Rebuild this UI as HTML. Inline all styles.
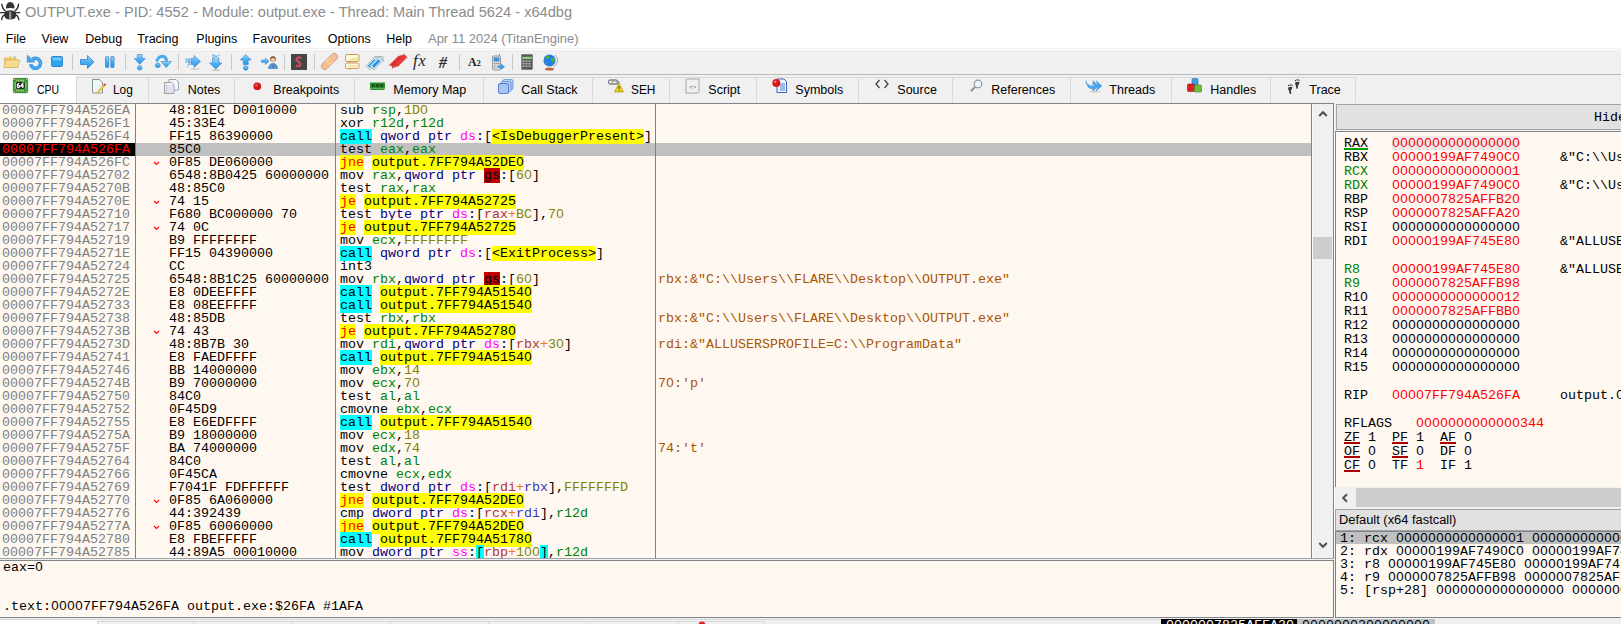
<!DOCTYPE html>
<html><head><meta charset="utf-8"><title>x64dbg</title>
<style>
*{margin:0;padding:0;box-sizing:border-box}
html,body{width:1621px;height:624px;overflow:hidden;background:#fff}
body{position:relative;font-family:"Liberation Sans",sans-serif;color:#000}
.a{position:absolute}
.ui{position:absolute;font-family:"Liberation Sans",sans-serif;font-size:12.5px;line-height:14px;white-space:pre;transform-origin:0 0}
.m{font-family:"Liberation Mono",monospace;font-size:13.3333px;white-space:pre}
.m i{font-family:"Liberation Sans",sans-serif;font-style:normal;display:inline-block;width:8px;text-align:center;line-height:10px}
.row{position:absolute;height:13px;line-height:13px}
.hl{position:absolute}
svg{position:absolute;overflow:visible}

.dz .mn,.dz .cm,.dz .br{color:#000}
.dz .cl{background:#00ffff;color:#000}
.dz .jc{background:#ffff00;color:#ff0000}
.dz .rg{color:#008300}
.dz .vl{color:#828200}
.dz .sz{color:#000080}
.dz .sg{color:#ff00ff}
.dz .gs{background:#c00000;color:#000}
.dz .ad{background:#ffff00;color:#000}
.dz .bs{background:#00ffff;color:#000}
.dz .mb{color:#b03434}
.dz .mi{color:#3838bc}
.dz .op{color:#f27711}
.ac{color:#aa5500}
</style></head><body>
<svg style="left:0;top:0" width="21" height="22" viewBox="0 0 21 22">
<g fill="#333"><path d="M6 8.6 Q6 2 10.2 2 Q14.5 2 14.5 8.6 Q10.2 7.6 6 8.6z"/>
<path d="M4.4 12 Q10.2 8.6 16 12 V15.5 Q16 19.4 10.2 19.4 Q4.4 19.4 4.4 15.5z"/></g>
<g fill="none" stroke="#333" stroke-width="1.4" stroke-linecap="round">
<path d="M1.8 4.2 Q2.4 9 5.5 11"/><path d="M18.6 4.2 Q18 9 15 11"/>
<path d="M0.3 12.6 H19.8"/>
<path d="M1.6 19.6 Q2.4 15.5 5 14.8"/><path d="M18.8 19.6 Q18 15.5 15.4 14.8"/></g>
<rect x="9.1" y="11.6" width="2.1" height="7.8" fill="#9a9a9a"/>
</svg>
<div class="ui" style="left:25px;top:1px;font-size:14.6px;line-height:22px;color:#8c8c8c">OUTPUT.exe - PID: 4552 - Module: output.exe - Thread: Main Thread 5624 - x64dbg</div>
<div class="ui" style="left:5.8px;top:32px">File</div>
<div class="ui" style="left:41.5px;top:32px">View</div>
<div class="ui" style="left:85.3px;top:32px">Debug</div>
<div class="ui" style="left:137.3px;top:32px">Tracing</div>
<div class="ui" style="left:196.3px;top:32px">Plugins</div>
<div class="ui" style="left:252.6px;top:32px">Favourites</div>
<div class="ui" style="left:327.7px;top:32px">Options</div>
<div class="ui" style="left:386.3px;top:32px">Help</div>
<div class="ui" style="left:428.3px;top:32px;color:#8a8a8a;transform:scaleX(1.037)">Apr 11 2024 (TitanEngine)</div>
<div class="a" style="left:0;top:48px;width:1621px;height:1px;background:#f0f0f0"></div>
<div class="a" style="left:0;top:50px;width:1621px;height:24px;background:#f0f0f0"></div>
<div class="a" style="left:0;top:74px;width:1621px;height:1px;background:#b9b9b9"></div>
<div class="a" style="left:0;top:75px;width:1621px;height:29px;background:#f0f0f0"></div>
<svg width="0" height="0" style="left:0;top:0"><defs><linearGradient id="gb" x1="0" y1="0" x2="0" y2="1"><stop offset="0" stop-color="#a6dbfb"/><stop offset="0.45" stop-color="#55b2f0"/><stop offset="1" stop-color="#1b98f2"/></linearGradient><linearGradient id="gf" x1="0" y1="0" x2="0" y2="1"><stop offset="0" stop-color="#fbe7a0"/><stop offset="1" stop-color="#e6c26a"/></linearGradient></defs></svg>
<svg style="left:3px;top:55px" width="17" height="14" viewBox="0 0 17 14"><path d="M1 2.5 h5 l1.5 -1.5 h4 v2 h2 v9.5 H1z" fill="#e9c66e"/>
<path d="M1 12.5 L2.5 5 H16.5 L15 12.5 z" fill="#f5dc92" stroke="#d8b25a" stroke-width="0.8"/>
<rect x="8" y="1.5" width="3" height="1.3" fill="#fff"/><circle cx="11.8" cy="2.2" r="0.8" fill="#3aa7d8"/></svg>
<svg style="left:27px;top:55px" width="15" height="15" viewBox="0 0 15 15"><path d="M3.6 9.2 A5 5 0 1 0 5.6 4.2" fill="none" stroke="#2f95e6" stroke-width="3.6"/>
<path d="M3.6 9.2 A5 5 0 1 0 5.6 4.2" fill="none" stroke="#7cc6f6" stroke-width="1.2" stroke-opacity="0.6"/>
<path d="M0.3 0.3 L8 6.8 L0.3 7.3 z" fill="#4aaaf0" stroke="#2f80cf" stroke-width="0.6"/></svg>
<svg style="left:51px;top:56px" width="12" height="11" viewBox="0 0 12 11"><rect x="0.5" y="0.5" width="11" height="10" rx="1" fill="#2ba3ef" stroke="#2f80cf" stroke-width="1"/>
<rect x="1.5" y="1.5" width="9" height="3" fill="#6cc6fa"/></svg>
<div class="a" style="left:72px;top:54px;width:1px;height:16px;background:#c8c8c8"></div>
<svg style="left:80px;top:55px" width="15" height="14" viewBox="0 0 15 14"><path d="M0.5 4.5 H7.5 V0.5 L14 7 L7.5 13.5 V9.5 H0.5 z" fill="url(#gb)" stroke="#2f80cf" stroke-width="0.8"/></svg>
<svg style="left:105px;top:56px" width="10" height="12" viewBox="0 0 10 12"><rect x="0.5" y="0.5" width="3.2" height="11" rx="1" fill="url(#gb)" stroke="#2f80cf" stroke-width="0.8"/>
<rect x="5.8" y="0.5" width="3.2" height="11" rx="1" fill="url(#gb)" stroke="#2f80cf" stroke-width="0.8"/></svg>
<div class="a" style="left:125px;top:54px;width:1px;height:16px;background:#c8c8c8"></div>
<svg style="left:134px;top:54px" width="12" height="17" viewBox="0 0 12 17"><path d="M3.3 0.5 H8.2 V4.5 H11.2 L5.75 10.2 L0.3 4.5 H3.3 z" fill="url(#gb)" stroke="#2f80cf" stroke-width="0.6"/>
<circle cx="5.75" cy="13.8" r="2.3" fill="url(#gb)" stroke="#2f80cf" stroke-width="0.6"/></svg>
<svg style="left:155px;top:55px" width="17" height="14" viewBox="0 0 17 14"><path d="M1.5 6.5 Q4 0.5 8.5 1.5 Q11.5 2.5 11.5 6" fill="none" stroke="#4aaaf0" stroke-width="3"/>
<path d="M6 6.5 H16.5 L11.25 12.5 z" fill="url(#gb)" stroke="#2f80cf" stroke-width="0.6"/>
<circle cx="2.8" cy="10.3" r="2.4" fill="url(#gb)" stroke="#2f80cf" stroke-width="0.6"/></svg>
<div class="a" style="left:178px;top:54px;width:1px;height:16px;background:#c8c8c8"></div>
<svg style="left:185px;top:55px" width="17" height="15" viewBox="0 0 17 15"><path d="M6 3.5 H9 V0.5 L15.5 6.5 L9 12.5 V9.5 H6 z" fill="url(#gb)" stroke="#2f80cf" stroke-width="0.6"/>
<g fill="#52aef0"><rect x="0.5" y="3.5" width="2" height="2"/><rect x="3" y="3.5" width="2" height="2"/><rect x="3" y="6" width="2" height="2"/><rect x="0.5" y="6" width="2" height="1.5"/><rect x="3" y="8.5" width="2" height="1.5"/><rect x="2" y="10.5" width="1.2" height="1.2"/></g>
<ellipse cx="10" cy="14" rx="5" ry="0.8" fill="#c9c9c9"/></svg>
<svg style="left:209px;top:54px" width="14" height="17" viewBox="0 0 14 17"><path d="M3.5 5 V9 H0.5 L6.75 15 L13 9 H10 V5 z" fill="url(#gb)" stroke="#2f80cf" stroke-width="0.6"/>
<g fill="#52aef0"><rect x="3.5" y="0.5" width="2" height="2"/><rect x="6" y="1.5" width="2" height="2"/><rect x="3.5" y="3" width="2" height="1.8"/><rect x="8.5" y="3" width="1.5" height="1.8"/><rect x="9.5" y="0.8" width="1.2" height="1.2"/></g>
<ellipse cx="7" cy="16.3" rx="4.5" ry="0.7" fill="#bdbdbd"/></svg>
<div class="a" style="left:231px;top:54px;width:1px;height:16px;background:#c8c8c8"></div>
<svg style="left:240px;top:54px" width="12" height="17" viewBox="0 0 12 17"><path d="M3.3 10.5 H8.2 V6 H11.2 L5.75 0.5 L0.3 6 H3.3 z" fill="url(#gb)" stroke="#2f80cf" stroke-width="0.6"/>
<circle cx="5.75" cy="14" r="2.3" fill="url(#gb)" stroke="#2f80cf" stroke-width="0.6"/></svg>
<svg style="left:261px;top:55px" width="17" height="15" viewBox="0 0 17 15"><path d="M0.5 5 H4.5 V3 L8 6.2 L4.5 9.5 V7.5 H0.5 z" fill="url(#gb)" stroke="#2f80cf" stroke-width="0.5"/>
<circle cx="12" cy="4" r="2.8" fill="#7a4a2a"/><circle cx="12" cy="4.8" r="2.1" fill="#f0c8a0"/>
<path d="M7.5 13.5 Q8 8.5 12 8.5 Q16 8.5 16.5 13.5 z" fill="#4b9be0" stroke="#2f6fb0" stroke-width="0.6"/>
<path d="M12 8.8 L11.3 12.5 L12.7 12.5 z" fill="#c0392b"/></svg>
<div class="a" style="left:284px;top:54px;width:1px;height:16px;background:#c8c8c8"></div>
<svg style="left:291px;top:54px" width="16" height="16" viewBox="0 0 16 16"><rect x="0" y="0" width="16" height="16" fill="#454545"/>
<path d="M10.5 4.2 Q8 2.5 6 4 Q4.5 5.5 7 7.5 Q10.5 9.5 9 11.5 Q7.5 13 5 11.5" fill="none" stroke="#c8505a" stroke-width="2.2"/></svg>
<div class="a" style="left:314px;top:54px;width:1px;height:16px;background:#c8c8c8"></div>
<svg style="left:321px;top:53px" width="17" height="17" viewBox="0 0 17 17"><g transform="rotate(-45 8.5 8.5)"><rect x="-1.5" y="5.2" width="20" height="6.6" rx="3.3" fill="#f2c09a" stroke="#d19770" stroke-width="0.9"/>
<rect x="6.5" y="5.6" width="4" height="5.8" fill="#f8d8a8"/><rect x="7.5" y="6.8" width="2" height="3.4" fill="#f4c070"/></g></svg>
<svg style="left:345px;top:54px" width="15" height="16" viewBox="0 0 15 16"><rect x="0.5" y="0.5" width="13.5" height="7" rx="1.6" fill="#fdf8dc" stroke="#c99a5e" stroke-width="1"/>
<path d="M3 6.8 Q7 3.2 13 3.6 V6.8z" fill="#e8e08a" opacity="0.75"/>
<path d="M4 7.4 L4 9.2 L5.8 7.4z" fill="#c99a5e"/>
<rect x="0.5" y="9" width="13.5" height="5.5" rx="1.6" fill="#fdf8dc" stroke="#c99a5e" stroke-width="1"/>
<rect x="4" y="11" width="9" height="2" fill="#e8e08a" opacity="0.7"/>
<path d="M3.5 14.4 L3.5 16 L5.5 14.4z" fill="#c99a5e"/></svg>
<svg style="left:367px;top:54px" width="17" height="16" viewBox="0 0 17 16"><g transform="translate(0 0) rotate(-45 6 9)"><rect x="-1" y="6" width="13" height="5.6" fill="#eaf4f8" stroke="#8fa9b0" stroke-width="0.8"/><path d="M12 6 L14.6 8.8 L12 11.6z" fill="#eaf4f8" stroke="#8fa9b0" stroke-width="0.8"/><rect x="0.3" y="7.3" width="9.5" height="3" fill="#2a98e8"/><circle cx="12" cy="8.8" r="0.9" fill="#fff" stroke="#8fa9b0" stroke-width="0.4"/></g><g transform="translate(4 0) rotate(-45 6 9)"><rect x="-1" y="6" width="13" height="5.6" fill="#eaf4f8" stroke="#8fa9b0" stroke-width="0.8"/><path d="M12 6 L14.6 8.8 L12 11.6z" fill="#eaf4f8" stroke="#8fa9b0" stroke-width="0.8"/><rect x="0.3" y="7.3" width="9.5" height="3" fill="#2a98e8"/><circle cx="12" cy="8.8" r="0.9" fill="#fff" stroke="#8fa9b0" stroke-width="0.4"/></g></svg>
<svg style="left:390px;top:53px" width="17" height="17" viewBox="0 0 17 17"><g transform="translate(0 0.0) rotate(-45 6 9)"><path d="M-1 6.6 H12.5 V11 H-1 L0.8 8.8z" fill="#e83a3a" stroke="#c81e1e" stroke-width="0.5"/></g><g transform="translate(2.5 -0.8) rotate(-45 6 9)"><path d="M-1 6.6 H12.5 V11 H-1 L0.8 8.8z" fill="#e83a3a" stroke="#c81e1e" stroke-width="0.5"/></g><g transform="translate(5 -1.5) rotate(-45 6 9)"><path d="M-1 6.6 H12.5 V11 H-1 L0.8 8.8z" fill="#e83a3a" stroke="#c81e1e" stroke-width="0.5"/></g></svg>
<div class="a" style="left:413px;top:52px;font-family:'Liberation Serif',serif;font-style:italic;font-size:17px;line-height:18px;color:#2a2a2a;letter-spacing:0.5px">fx</div>
<div class="a" style="left:439px;top:54px;font-family:'Liberation Serif',serif;font-weight:bold;font-style:italic;font-size:16px;line-height:18px;color:#2a2a2a">#</div>
<div class="a" style="left:459px;top:54px;width:1px;height:16px;background:#c8c8c8"></div>
<div class="a" style="left:468px;top:55px;font-family:'Liberation Serif',serif;font-weight:bold;font-size:12px;line-height:14px;color:#222">A<span style="font-size:8px">2</span></div>
<svg style="left:492px;top:54px" width="14" height="17" viewBox="0 0 14 17"><rect x="0.5" y="2" width="8" height="14" rx="1" fill="#d9d9d9" stroke="#888" stroke-width="0.8"/>
<rect x="1.8" y="3.5" width="5.5" height="4" fill="#3c8fd8"/>
<g fill="#888"><rect x="2" y="9" width="1.3" height="1"/><rect x="4" y="9" width="1.3" height="1"/><rect x="6" y="9" width="1.3" height="1"/><rect x="2" y="11" width="1.3" height="1"/><rect x="2" y="13" width="1.3" height="1"/></g>
<line x1="7.5" y1="0" x2="7.5" y2="2" stroke="#555" stroke-width="0.6"/>
<path d="M5.5 11.5 H9 V9.5 L13 12.8 L9 16 V14 H5.5 z" fill="#3aa0ea"/></svg>
<div class="a" style="left:512px;top:54px;width:1px;height:16px;background:#c8c8c8"></div>
<svg style="left:521px;top:54px" width="12" height="16" viewBox="0 0 12 16"><rect x="0.3" y="0.3" width="11.4" height="15.4" rx="1" fill="#5a5a5a"/>
<rect x="1.3" y="2.8" width="9.4" height="2.3" fill="#8ed07a"/>
<g fill="#bdbdbd"><rect x="1.5" y="6.5" width="2" height="1.4"/><rect x="4.5" y="6.5" width="2" height="1.4"/><rect x="7.5" y="6.5" width="2" height="1.4"/>
<rect x="1.5" y="9" width="2" height="1.4"/><rect x="4.5" y="9" width="2" height="1.4"/><rect x="7.5" y="9" width="2" height="1.4"/>
<rect x="1.5" y="11.5" width="2" height="1.4"/><rect x="4.5" y="11.5" width="2" height="1.4"/><rect x="7.5" y="11.5" width="2" height="1.4"/></g></svg>
<svg style="left:543px;top:54px" width="15" height="17" viewBox="0 0 15 17"><circle cx="6.5" cy="6.5" r="6" fill="#2a7de0"/>
<path d="M3 2.5 Q5 1 7 3 Q6 5 4 5 Q2 4.5 3 2.5z M8 4 Q11 3.5 12 6 Q11 9 9 8 Q7.5 6 8 4z M3.5 8 Q5 8.5 5 11 Q3.5 10.5 3.5 8z" fill="#3cb44a"/>
<path d="M12 1 A7 7 0 0 1 10 13" fill="none" stroke="#999" stroke-width="0.8"/>
<ellipse cx="6.5" cy="15" rx="4.5" ry="1.5" fill="#c0643a"/></svg>
<div class="a" style="left:77px;top:77px;width:1278px;height:1px;background:#d9d9d9"></div>
<div class="a" style="left:76px;top:77px;width:1px;height:26px;background:#d9d9d9"></div>
<div class="a" style="left:148px;top:77px;width:1px;height:26px;background:#d9d9d9"></div>
<div class="a" style="left:234px;top:77px;width:1px;height:26px;background:#d9d9d9"></div>
<div class="a" style="left:354px;top:77px;width:1px;height:26px;background:#d9d9d9"></div>
<div class="a" style="left:483px;top:77px;width:1px;height:26px;background:#d9d9d9"></div>
<div class="a" style="left:592px;top:77px;width:1px;height:26px;background:#d9d9d9"></div>
<div class="a" style="left:669px;top:77px;width:1px;height:26px;background:#d9d9d9"></div>
<div class="a" style="left:756px;top:77px;width:1px;height:26px;background:#d9d9d9"></div>
<div class="a" style="left:858px;top:77px;width:1px;height:26px;background:#d9d9d9"></div>
<div class="a" style="left:952px;top:77px;width:1px;height:26px;background:#d9d9d9"></div>
<div class="a" style="left:1070px;top:77px;width:1px;height:26px;background:#d9d9d9"></div>
<div class="a" style="left:1171px;top:77px;width:1px;height:26px;background:#d9d9d9"></div>
<div class="a" style="left:1270px;top:77px;width:1px;height:26px;background:#d9d9d9"></div>
<div class="a" style="left:1355px;top:77px;width:1px;height:26px;background:#d9d9d9"></div>
<div class="a" style="left:0;top:75px;width:76px;height:28px;background:#fff"></div>
<div class="a" style="left:0;top:103px;width:1334px;height:1px;background:#7f858a"></div>
<div class="ui" style="left:37.0px;top:83px;transform:scaleX(0.84)">CPU</div>
<div class="ui" style="left:113.3px;top:83px;transform:scaleX(0.95)">Log</div>
<div class="ui" style="left:187.7px;top:83px">Notes</div>
<div class="ui" style="left:273.3px;top:83px">Breakpoints</div>
<div class="ui" style="left:393.3px;top:83px">Memory Map</div>
<div class="ui" style="left:521.3px;top:83px">Call Stack</div>
<div class="ui" style="left:631.3px;top:83px;transform:scaleX(0.95)">SEH</div>
<div class="ui" style="left:708.3px;top:83px">Script</div>
<div class="ui" style="left:795.3px;top:83px">Symbols</div>
<div class="ui" style="left:897.3px;top:83px">Source</div>
<div class="ui" style="left:991.3px;top:83px">References</div>
<div class="ui" style="left:1109.3px;top:83px">Threads</div>
<div class="ui" style="left:1210.3px;top:83px">Handles</div>
<div class="ui" style="left:1309.3px;top:83px">Trace</div>
<svg style="left:13px;top:78px" width="15" height="15" viewBox="0 0 15 15"><rect x="0.3" y="0.3" width="14.4" height="14.4" rx="1" fill="#2f9c37" stroke="#1f5f24" stroke-width="0.6"/>
<g fill="#e9d58a"><rect x="3.20" y="1.6" width="0.9" height="1.6"/><rect x="3.20" y="11.8" width="0.9" height="1.6"/><rect x="4.95" y="1.6" width="0.9" height="1.6"/><rect x="4.95" y="11.8" width="0.9" height="1.6"/><rect x="6.70" y="1.6" width="0.9" height="1.6"/><rect x="6.70" y="11.8" width="0.9" height="1.6"/><rect x="8.45" y="1.6" width="0.9" height="1.6"/><rect x="8.45" y="11.8" width="0.9" height="1.6"/><rect x="10.20" y="1.6" width="0.9" height="1.6"/><rect x="10.20" y="11.8" width="0.9" height="1.6"/><rect x="1.6" y="4.30" width="1.6" height="0.9"/><rect x="11.8" y="4.30" width="1.6" height="0.9"/><rect x="1.6" y="6.05" width="1.6" height="0.9"/><rect x="11.8" y="6.05" width="1.6" height="0.9"/><rect x="1.6" y="7.80" width="1.6" height="0.9"/><rect x="11.8" y="7.80" width="1.6" height="0.9"/><rect x="1.6" y="9.55" width="1.6" height="0.9"/><rect x="11.8" y="9.55" width="1.6" height="0.9"/><circle cx="1.4" cy="1.4" r="0.6"/><circle cx="13.6" cy="1.4" r="0.6"/><circle cx="1.4" cy="13.6" r="0.6"/><circle cx="13.6" cy="13.6" r="0.6"/></g>
<rect x="3.2" y="4.1" width="8.6" height="6.6" rx="0.6" fill="#1d1d1d"/>
<g fill="none" stroke="#f4f4f4" stroke-width="1.2"><path d="M6.3 5.3 Q4.3 5.3 4.3 7.5 Q4.3 9.6 5.5 9.6 Q6.6 9.6 6.6 8.4 Q6.6 7.3 5.4 7.3 Q4.4 7.3 4.3 8"/><path d="M9.8 9.9 V5.1 L7.6 8.2 H10.8"/></g></svg>
<svg style="left:92px;top:79px" width="15" height="15" viewBox="0 0 15 15"><path d="M0.5 0.5 H7.5 L10.5 3.5 V14 H0.5 z" fill="#eef5f5" stroke="#7d8a8a" stroke-width="0.9"/>
<path d="M5 14 L12.5 6" stroke="#e3c640" stroke-width="2.2"/><path d="M12 6.5 L13.5 5" stroke="#e04040" stroke-width="2"/></svg>
<svg style="left:164px;top:79px" width="16" height="15" viewBox="0 0 16 15"><path d="M5 0.5 H12 L14.5 3 V11 H5 z" fill="#f4f6fb" stroke="#8a8f95" stroke-width="0.8"/>
<path d="M0.5 3.5 H7.5 L10 6 V14.5 H0.5 z" fill="#f4f6fb" stroke="#8a8f95" stroke-width="0.8"/>
<g stroke="#a8b4e8" stroke-width="0.6"><line x1="1" y1="7" x2="9.5" y2="7"/><line x1="1" y1="9" x2="9.5" y2="9"/><line x1="1" y1="11" x2="9.5" y2="11"/><line x1="1" y1="13" x2="9.5" y2="13"/></g>
<line x1="2.5" y1="4" x2="2.5" y2="14" stroke="#f0a0a0" stroke-width="0.5"/></svg>
<svg style="left:253px;top:82px" width="9" height="9" viewBox="0 0 9 9"><circle cx="4.3" cy="4.3" r="3.9" fill="#d01818"/><circle cx="3.3" cy="3.2" r="1.3" fill="#f06060"/></svg>
<svg style="left:370px;top:82px" width="15" height="9" viewBox="0 0 15 9"><rect x="0" y="0.5" width="15" height="6" fill="#2d8f2d"/>
<g fill="#155515"><rect x="1.8" y="2" width="3" height="3"/><rect x="6" y="2" width="3" height="3"/><rect x="10.2" y="2" width="3" height="3"/></g>
<g fill="#2d8f2d"><rect x="0.5" y="6.5" width="14" height="1.5"/></g></svg>
<svg style="left:498px;top:79px" width="16" height="15" viewBox="0 0 16 15"><rect x="5" y="0.5" width="10" height="10" rx="1.5" fill="#b8d0f4" stroke="#5a86d8" stroke-width="0.8"/>
<rect x="3" y="2.5" width="10" height="10" rx="1.5" fill="#b8d0f4" stroke="#5a86d8" stroke-width="0.8"/>
<rect x="0.5" y="4.5" width="10" height="10" rx="1.5" fill="#a9c4f0" stroke="#4a76d0" stroke-width="0.9"/></svg>
<svg style="left:608px;top:79px" width="16" height="14" viewBox="0 0 16 14"><rect x="0.5" y="1" width="9" height="4" rx="2" fill="none" stroke="#888" stroke-width="1.4"/>
<rect x="4" y="2" width="7" height="3" rx="1.5" fill="none" stroke="#999" stroke-width="1.2"/>
<path d="M11 4 L15.5 13 H6.5 z" fill="#f2d21a" stroke="#a08a00" stroke-width="0.6"/>
<rect x="10.6" y="7" width="0.9" height="3" fill="#222"/><rect x="10.6" y="11" width="0.9" height="1" fill="#222"/></svg>
<svg style="left:685px;top:78px" width="16" height="16" viewBox="0 0 16 16"><path d="M2 1 H14 V13.5 Q14 15 12.5 15 H1 V2.5 Q1 1 2 1 z" fill="#eef1ee" stroke="#8e9a94" stroke-width="0.8"/>
<text x="7.8" y="10.5" font-family="Liberation Mono" font-size="6" fill="#555" text-anchor="middle">&lt;&gt;</text></svg>
<svg style="left:772px;top:78px" width="16" height="16" viewBox="0 0 16 16"><path d="M5 1 H12 L14.5 3.5 V14.5 H5 z" fill="#f0f4ff" stroke="#2255aa" stroke-width="0.9"/>
<g stroke="#2d5fc0" stroke-width="0.8"><line x1="8" y1="6" x2="13" y2="6"/><line x1="8" y1="8" x2="13" y2="8"/><line x1="8" y1="10" x2="13" y2="10"/><line x1="8" y1="12" x2="13" y2="12"/></g>
<circle cx="4.3" cy="5" r="4" fill="#d81818"/><circle cx="3.2" cy="3.8" r="1.3" fill="#f57070"/></svg>
<svg style="left:875px;top:79px" width="14" height="10" viewBox="0 0 14 10"><path d="M4.5 1 L1 5 L4.5 9 M9.5 1 L13 5 L9.5 9" fill="none" stroke="#444" stroke-width="1.3"/></svg>
<svg style="left:970px;top:79px" width="13" height="13" viewBox="0 0 13 13"><circle cx="8" cy="5" r="3.8" fill="#f2f6fa" stroke="#8a9aa8" stroke-width="1.2"/>
<path d="M5.2 7.8 L1 12" stroke="#8a8a8a" stroke-width="1.8"/></svg>
<svg style="left:1085px;top:80px" width="18" height="13" viewBox="0 0 18 13"><ellipse cx="10" cy="11.6" rx="6" ry="0.9" fill="#d0d0d0"/>
<path d="M1 0.8 Q1.5 6.5 8 5.8 V0.8 L13.2 6 L8 11 V8.8 Q2 9.5 1 0.8z" fill="#4aa8ee" stroke="#2f86d6" stroke-width="0.5"/>
<path d="M11 0.8 L16.8 6 L11 11 L13.2 6z" fill="#3aa2f0" stroke="#2f86d6" stroke-width="0.5"/>
<path d="M3 4 Q5 6.3 9 5.5" fill="none" stroke="#9ad4fa" stroke-width="1"/></svg>
<svg style="left:1187px;top:78px" width="16" height="16" viewBox="0 0 16 16"><rect x="5" y="0.5" width="6" height="6.5" rx="1" fill="#3aa0e8" stroke="#1f6ab0" stroke-width="0.6"/>
<rect x="0.5" y="6" width="7" height="7.5" rx="1" fill="#e02020" stroke="#901010" stroke-width="0.6"/>
<rect x="7.5" y="7" width="7" height="7" rx="1" fill="#6cc040" stroke="#3a8020" stroke-width="0.6"/></svg>
<svg style="left:1287px;top:78px" width="15" height="17" viewBox="0 0 15 17"><g fill="#3a3a3a">
<path d="M1.2 9.5 Q3.5 8 5.5 9.2 Q5 11.5 3.8 12.5 L4.3 15.2 Q3.8 16.5 2.8 15.8 L1.8 12.5 Q0.8 11 1.2 9.5z"/>
<circle cx="1.6" cy="7.6" r="0.75"/><circle cx="3.3" cy="7" r="0.75"/><circle cx="5" cy="7.3" r="0.75"/>
<path d="M8.2 4.4 Q10.5 3 12.6 4.2 Q12.1 6.5 11 7.5 L10.8 10 Q10.3 11.4 9.4 10.6 L8.8 7.5 Q7.8 6 8.2 4.4z"/>
<circle cx="8.6" cy="2.4" r="0.75"/><circle cx="10.3" cy="1.8" r="0.75"/><circle cx="12" cy="2.2" r="0.75"/></g></svg>
<div class="a" style="left:0;top:104px;width:1311px;height:454px;background:#fff8f0"></div>
<div class="a" style="left:136px;top:143px;width:1175px;height:13px;background:#c0c0c0"></div>
<div class="a" style="left:0;top:143px;width:135px;height:13px;background:#000"></div>
<div class="a" style="left:135px;top:104px;width:1px;height:454px;background:#7d8185"></div>
<div class="a" style="left:335px;top:104px;width:1px;height:454px;background:#7d8185"></div>
<div class="a" style="left:655px;top:104px;width:1px;height:454px;background:#7d8185"></div>
<div class="a m dz" style="left:0;top:104px;width:1311px;height:454px">
<div class="row" style="left:2px;top:0px;color:#808080">00007FF794A526EA</div>
<div class="row" style="left:169px;top:0px">48:81EC D0010000</div>
<div class="row" style="left:340px;top:0px"><span class="mn">sub</span> <span class="rg">rsp</span><span class="cm">,</span><span class="vl">1D<i>0</i></span></div>
<div class="row" style="left:2px;top:13px;color:#808080">00007FF794A526F1</div>
<div class="row" style="left:169px;top:13px">45:33E4</div>
<div class="row" style="left:340px;top:13px"><span class="mn">xor</span> <span class="rg">r12d</span><span class="cm">,</span><span class="rg">r12d</span></div>
<div class="row" style="left:2px;top:26px;color:#808080">00007FF794A526F4</div>
<div class="row" style="left:169px;top:26px">FF15 86390000</div>
<div class="row" style="left:340px;top:26px"><span class="cl">call</span> <span class="sz">qword ptr</span> <span class="sg">ds</span><span class="cm">:</span><span class="br">[</span><span class="ad">&lt;IsDebuggerPresent&gt;</span><span class="br">]</span></div>
<div class="row" style="left:2px;top:39px;color:#ff0000">00007FF794A526FA</div>
<div class="row" style="left:169px;top:39px">85C0</div>
<div class="row" style="left:340px;top:39px"><span class="mn">test</span> <span class="rg">eax</span><span class="cm">,</span><span class="rg">eax</span></div>
<div class="row" style="left:2px;top:52px;color:#808080">00007FF794A526FC</div>
<div class="row" style="left:169px;top:52px">0F85 DE060000</div>
<svg style="left:153px;top:57px" width="7" height="5" viewBox="0 0 7 5"><path d="M1 1 L3.5 3.5 L6 1" fill="none" stroke="#ff0000" stroke-width="1.1"/></svg>
<div class="row" style="left:340px;top:52px"><span class="jc">jne</span> <span class="ad">output.7FF794A52DE<i>0</i></span></div>
<div class="row" style="left:2px;top:65px;color:#808080">00007FF794A52702</div>
<div class="row" style="left:169px;top:65px">6548:8B0425 60000000</div>
<div class="row" style="left:340px;top:65px"><span class="mn">mov</span> <span class="rg">rax</span><span class="cm">,</span><span class="sz">qword ptr</span> <span class="gs">gs</span><span class="cm">:</span><span class="br">[</span><span class="vl">6<i>0</i></span><span class="br">]</span></div>
<div class="row" style="left:2px;top:78px;color:#808080">00007FF794A5270B</div>
<div class="row" style="left:169px;top:78px">48:85C0</div>
<div class="row" style="left:340px;top:78px"><span class="mn">test</span> <span class="rg">rax</span><span class="cm">,</span><span class="rg">rax</span></div>
<div class="row" style="left:2px;top:91px;color:#808080">00007FF794A5270E</div>
<div class="row" style="left:169px;top:91px">74 15</div>
<svg style="left:153px;top:96px" width="7" height="5" viewBox="0 0 7 5"><path d="M1 1 L3.5 3.5 L6 1" fill="none" stroke="#ff0000" stroke-width="1.1"/></svg>
<div class="row" style="left:340px;top:91px"><span class="jc">je</span> <span class="ad">output.7FF794A52725</span></div>
<div class="row" style="left:2px;top:104px;color:#808080">00007FF794A52710</div>
<div class="row" style="left:169px;top:104px">F680 BC000000 70</div>
<div class="row" style="left:340px;top:104px"><span class="mn">test</span> <span class="sz">byte ptr</span> <span class="sg">ds</span><span class="cm">:</span><span class="br">[</span><span class="mb">rax</span><span class="op">+</span><span class="vl">BC</span><span class="br">]</span><span class="cm">,</span><span class="vl">7<i>0</i></span></div>
<div class="row" style="left:2px;top:117px;color:#808080">00007FF794A52717</div>
<div class="row" style="left:169px;top:117px">74 0C</div>
<svg style="left:153px;top:122px" width="7" height="5" viewBox="0 0 7 5"><path d="M1 1 L3.5 3.5 L6 1" fill="none" stroke="#ff0000" stroke-width="1.1"/></svg>
<div class="row" style="left:340px;top:117px"><span class="jc">je</span> <span class="ad">output.7FF794A52725</span></div>
<div class="row" style="left:2px;top:130px;color:#808080">00007FF794A52719</div>
<div class="row" style="left:169px;top:130px">B9 FFFFFFFF</div>
<div class="row" style="left:340px;top:130px"><span class="mn">mov</span> <span class="rg">ecx</span><span class="cm">,</span><span class="vl">FFFFFFFF</span></div>
<div class="row" style="left:2px;top:143px;color:#808080">00007FF794A5271E</div>
<div class="row" style="left:169px;top:143px">FF15 04390000</div>
<div class="row" style="left:340px;top:143px"><span class="cl">call</span> <span class="sz">qword ptr</span> <span class="sg">ds</span><span class="cm">:</span><span class="br">[</span><span class="ad">&lt;ExitProcess&gt;</span><span class="br">]</span></div>
<div class="row" style="left:2px;top:156px;color:#808080">00007FF794A52724</div>
<div class="row" style="left:169px;top:156px">CC</div>
<div class="row" style="left:340px;top:156px"><span class="mn">int3</span></div>
<div class="row" style="left:2px;top:169px;color:#808080">00007FF794A52725</div>
<div class="row" style="left:169px;top:169px">6548:8B1C25 60000000</div>
<div class="row" style="left:340px;top:169px"><span class="mn">mov</span> <span class="rg">rbx</span><span class="cm">,</span><span class="sz">qword ptr</span> <span class="gs">gs</span><span class="cm">:</span><span class="br">[</span><span class="vl">6<i>0</i></span><span class="br">]</span></div>
<div class="row ac" style="left:658px;top:169px">rbx:&amp;&quot;C:\\Users\\FLARE\\Desktop\\OUTPUT.exe&quot;</div>
<div class="row" style="left:2px;top:182px;color:#808080">00007FF794A5272E</div>
<div class="row" style="left:169px;top:182px">E8 0DEEFFFF</div>
<div class="row" style="left:340px;top:182px"><span class="cl">call</span> <span class="ad">output.7FF794A5154<i>0</i></span></div>
<div class="row" style="left:2px;top:195px;color:#808080">00007FF794A52733</div>
<div class="row" style="left:169px;top:195px">E8 08EEFFFF</div>
<div class="row" style="left:340px;top:195px"><span class="cl">call</span> <span class="ad">output.7FF794A5154<i>0</i></span></div>
<div class="row" style="left:2px;top:208px;color:#808080">00007FF794A52738</div>
<div class="row" style="left:169px;top:208px">48:85DB</div>
<div class="row" style="left:340px;top:208px"><span class="mn">test</span> <span class="rg">rbx</span><span class="cm">,</span><span class="rg">rbx</span></div>
<div class="row ac" style="left:658px;top:208px">rbx:&amp;&quot;C:\\Users\\FLARE\\Desktop\\OUTPUT.exe&quot;</div>
<div class="row" style="left:2px;top:221px;color:#808080">00007FF794A5273B</div>
<div class="row" style="left:169px;top:221px">74 43</div>
<svg style="left:153px;top:226px" width="7" height="5" viewBox="0 0 7 5"><path d="M1 1 L3.5 3.5 L6 1" fill="none" stroke="#ff0000" stroke-width="1.1"/></svg>
<div class="row" style="left:340px;top:221px"><span class="jc">je</span> <span class="ad">output.7FF794A5278<i>0</i></span></div>
<div class="row" style="left:2px;top:234px;color:#808080">00007FF794A5273D</div>
<div class="row" style="left:169px;top:234px">48:8B7B 30</div>
<div class="row" style="left:340px;top:234px"><span class="mn">mov</span> <span class="rg">rdi</span><span class="cm">,</span><span class="sz">qword ptr</span> <span class="sg">ds</span><span class="cm">:</span><span class="br">[</span><span class="mb">rbx</span><span class="op">+</span><span class="vl">3<i>0</i></span><span class="br">]</span></div>
<div class="row ac" style="left:658px;top:234px">rdi:&amp;&quot;ALLUSERSPROFILE=C:\\ProgramData&quot;</div>
<div class="row" style="left:2px;top:247px;color:#808080">00007FF794A52741</div>
<div class="row" style="left:169px;top:247px">E8 FAEDFFFF</div>
<div class="row" style="left:340px;top:247px"><span class="cl">call</span> <span class="ad">output.7FF794A5154<i>0</i></span></div>
<div class="row" style="left:2px;top:260px;color:#808080">00007FF794A52746</div>
<div class="row" style="left:169px;top:260px">BB 14000000</div>
<div class="row" style="left:340px;top:260px"><span class="mn">mov</span> <span class="rg">ebx</span><span class="cm">,</span><span class="vl">14</span></div>
<div class="row" style="left:2px;top:273px;color:#808080">00007FF794A5274B</div>
<div class="row" style="left:169px;top:273px">B9 70000000</div>
<div class="row" style="left:340px;top:273px"><span class="mn">mov</span> <span class="rg">ecx</span><span class="cm">,</span><span class="vl">7<i>0</i></span></div>
<div class="row ac" style="left:658px;top:273px">7<i>0</i>:'p'</div>
<div class="row" style="left:2px;top:286px;color:#808080">00007FF794A52750</div>
<div class="row" style="left:169px;top:286px">84C0</div>
<div class="row" style="left:340px;top:286px"><span class="mn">test</span> <span class="rg">al</span><span class="cm">,</span><span class="rg">al</span></div>
<div class="row" style="left:2px;top:299px;color:#808080">00007FF794A52752</div>
<div class="row" style="left:169px;top:299px">0F45D9</div>
<div class="row" style="left:340px;top:299px"><span class="mn">cmovne</span> <span class="rg">ebx</span><span class="cm">,</span><span class="rg">ecx</span></div>
<div class="row" style="left:2px;top:312px;color:#808080">00007FF794A52755</div>
<div class="row" style="left:169px;top:312px">E8 E6EDFFFF</div>
<div class="row" style="left:340px;top:312px"><span class="cl">call</span> <span class="ad">output.7FF794A5154<i>0</i></span></div>
<div class="row" style="left:2px;top:325px;color:#808080">00007FF794A5275A</div>
<div class="row" style="left:169px;top:325px">B9 18000000</div>
<div class="row" style="left:340px;top:325px"><span class="mn">mov</span> <span class="rg">ecx</span><span class="cm">,</span><span class="vl">18</span></div>
<div class="row" style="left:2px;top:338px;color:#808080">00007FF794A5275F</div>
<div class="row" style="left:169px;top:338px">BA 74000000</div>
<div class="row" style="left:340px;top:338px"><span class="mn">mov</span> <span class="rg">edx</span><span class="cm">,</span><span class="vl">74</span></div>
<div class="row ac" style="left:658px;top:338px">74:'t'</div>
<div class="row" style="left:2px;top:351px;color:#808080">00007FF794A52764</div>
<div class="row" style="left:169px;top:351px">84C0</div>
<div class="row" style="left:340px;top:351px"><span class="mn">test</span> <span class="rg">al</span><span class="cm">,</span><span class="rg">al</span></div>
<div class="row" style="left:2px;top:364px;color:#808080">00007FF794A52766</div>
<div class="row" style="left:169px;top:364px">0F45CA</div>
<div class="row" style="left:340px;top:364px"><span class="mn">cmovne</span> <span class="rg">ecx</span><span class="cm">,</span><span class="rg">edx</span></div>
<div class="row" style="left:2px;top:377px;color:#808080">00007FF794A52769</div>
<div class="row" style="left:169px;top:377px">F7041F FDFFFFFF</div>
<div class="row" style="left:340px;top:377px"><span class="mn">test</span> <span class="sz">dword ptr</span> <span class="sg">ds</span><span class="cm">:</span><span class="br">[</span><span class="mb">rdi</span><span class="op">+</span><span class="mi">rbx</span><span class="br">]</span><span class="cm">,</span><span class="vl">FFFFFFFD</span></div>
<div class="row" style="left:2px;top:390px;color:#808080">00007FF794A52770</div>
<div class="row" style="left:169px;top:390px">0F85 6A060000</div>
<svg style="left:153px;top:395px" width="7" height="5" viewBox="0 0 7 5"><path d="M1 1 L3.5 3.5 L6 1" fill="none" stroke="#ff0000" stroke-width="1.1"/></svg>
<div class="row" style="left:340px;top:390px"><span class="jc">jne</span> <span class="ad">output.7FF794A52DE<i>0</i></span></div>
<div class="row" style="left:2px;top:403px;color:#808080">00007FF794A52776</div>
<div class="row" style="left:169px;top:403px">44:392439</div>
<div class="row" style="left:340px;top:403px"><span class="mn">cmp</span> <span class="sz">dword ptr</span> <span class="sg">ds</span><span class="cm">:</span><span class="br">[</span><span class="mb">rcx</span><span class="op">+</span><span class="mi">rdi</span><span class="br">]</span><span class="cm">,</span><span class="rg">r12d</span></div>
<div class="row" style="left:2px;top:416px;color:#808080">00007FF794A5277A</div>
<div class="row" style="left:169px;top:416px">0F85 60060000</div>
<svg style="left:153px;top:421px" width="7" height="5" viewBox="0 0 7 5"><path d="M1 1 L3.5 3.5 L6 1" fill="none" stroke="#ff0000" stroke-width="1.1"/></svg>
<div class="row" style="left:340px;top:416px"><span class="jc">jne</span> <span class="ad">output.7FF794A52DE<i>0</i></span></div>
<div class="row" style="left:2px;top:429px;color:#808080">00007FF794A52780</div>
<div class="row" style="left:169px;top:429px">E8 FBEFFFFF</div>
<div class="row" style="left:340px;top:429px"><span class="cl">call</span> <span class="ad">output.7FF794A5178<i>0</i></span></div>
<div class="row" style="left:2px;top:442px;color:#808080">00007FF794A52785</div>
<div class="row" style="left:169px;top:442px">44:89A5 00010000</div>
<div class="row" style="left:340px;top:442px"><span class="mn">mov</span> <span class="sz">dword ptr</span> <span class="sg">ss</span><span class="cm">:</span><span class="bs">[</span><span class="mb">rbp</span><span class="op">+</span><span class="vl">1<i>0</i><i>0</i></span><span class="bs">]</span><span class="cm">,</span><span class="rg">r12d</span></div>
</div>
<div class="a" style="left:1311px;top:104px;width:1px;height:454px;background:#808488"></div>
<div class="a" style="left:1312px;top:104px;width:1px;height:454px;background:#fafafa"></div>
<div class="a" style="left:1313px;top:104px;width:20px;height:454px;background:#f0f0f0"></div>
<div class="a" style="left:1333px;top:104px;width:1px;height:454px;background:#808488"></div>
<svg style="left:1318px;top:110px" width="10" height="7" viewBox="0 0 10 7"><path d="M1.2 6 L5 2.2 L8.8 6" fill="none" stroke="#505050" stroke-width="2"/></svg>
<svg style="left:1318px;top:542px" width="10" height="7" viewBox="0 0 10 7"><path d="M1.2 1 L5 4.8 L8.8 1" fill="none" stroke="#505050" stroke-width="2"/></svg>
<div class="a" style="left:1313px;top:237px;width:19px;height:22px;background:#cdcdcd"></div>
<div class="a" style="left:1334px;top:104px;width:287px;height:27px;background:#f0f0f0"></div>
<div class="a" style="left:1336px;top:104px;width:290px;height:26px;background:#e1e1e1;border:1px solid #a3a3a3"></div>
<div class="a m" style="left:1594px;top:111px;line-height:13px;color:#000;">Hide FPU</div>
<div class="a" style="left:1335px;top:131px;width:286px;height:356px;background:#fff8f0;border-left:1px solid #7f858a;border-top:1px solid #7f858a"></div>
<div class="a" style="left:1392px;top:136px;width:128px;height:14px;background:#e8e8e8"></div>
<div class="a m" style="left:1344px;top:137px;line-height:13px;color:#000;">RAX</div>
<div class="a m" style="left:1392px;top:137px;line-height:13px;color:#ff0000;"><i>0</i><i>0</i><i>0</i><i>0</i><i>0</i><i>0</i><i>0</i><i>0</i><i>0</i><i>0</i><i>0</i><i>0</i><i>0</i><i>0</i><i>0</i><i>0</i></div>
<div class="a m" style="left:1344px;top:151px;line-height:13px;color:#000;">RBX</div>
<div class="a m" style="left:1392px;top:151px;line-height:13px;color:#ff0000;"><i>0</i><i>0</i><i>0</i><i>0</i><i>0</i>199AF749<i>0</i>C<i>0</i></div>
<div class="a m" style="left:1560px;top:151px;line-height:13px;color:#000;">&amp;&quot;C:\\Users\\FLARE\\Desktop\\OUTPUT.exe&quot;</div>
<div class="a m" style="left:1344px;top:165px;line-height:13px;color:#008000;">RCX</div>
<div class="a m" style="left:1392px;top:165px;line-height:13px;color:#ff0000;"><i>0</i><i>0</i><i>0</i><i>0</i><i>0</i><i>0</i><i>0</i><i>0</i><i>0</i><i>0</i><i>0</i><i>0</i><i>0</i><i>0</i><i>0</i>1</div>
<div class="a m" style="left:1344px;top:179px;line-height:13px;color:#008000;">RDX</div>
<div class="a m" style="left:1392px;top:179px;line-height:13px;color:#ff0000;"><i>0</i><i>0</i><i>0</i><i>0</i><i>0</i>199AF749<i>0</i>C<i>0</i></div>
<div class="a m" style="left:1560px;top:179px;line-height:13px;color:#000;">&amp;&quot;C:\\Users\\FLARE\\Desktop\\OUTPUT.exe&quot;</div>
<div class="a m" style="left:1344px;top:193px;line-height:13px;color:#000;">RBP</div>
<div class="a m" style="left:1392px;top:193px;line-height:13px;color:#ff0000;"><i>0</i><i>0</i><i>0</i><i>0</i><i>0</i><i>0</i>7825AFFB2<i>0</i></div>
<div class="a m" style="left:1344px;top:207px;line-height:13px;color:#000;">RSP</div>
<div class="a m" style="left:1392px;top:207px;line-height:13px;color:#ff0000;"><i>0</i><i>0</i><i>0</i><i>0</i><i>0</i><i>0</i>7825AFFA2<i>0</i></div>
<div class="a m" style="left:1344px;top:221px;line-height:13px;color:#000;">RSI</div>
<div class="a m" style="left:1392px;top:221px;line-height:13px;color:#000;"><i>0</i><i>0</i><i>0</i><i>0</i><i>0</i><i>0</i><i>0</i><i>0</i><i>0</i><i>0</i><i>0</i><i>0</i><i>0</i><i>0</i><i>0</i><i>0</i></div>
<div class="a m" style="left:1344px;top:235px;line-height:13px;color:#000;">RDI</div>
<div class="a m" style="left:1392px;top:235px;line-height:13px;color:#ff0000;"><i>0</i><i>0</i><i>0</i><i>0</i><i>0</i>199AF745E8<i>0</i></div>
<div class="a m" style="left:1560px;top:235px;line-height:13px;color:#000;">&amp;&quot;ALLUSERSPROFILE=C:\\ProgramData&quot;</div>
<div class="a m" style="left:1344px;top:263px;line-height:13px;color:#008000;">R8</div>
<div class="a m" style="left:1392px;top:263px;line-height:13px;color:#ff0000;"><i>0</i><i>0</i><i>0</i><i>0</i><i>0</i>199AF745E8<i>0</i></div>
<div class="a m" style="left:1560px;top:263px;line-height:13px;color:#000;">&amp;&quot;ALLUSERSPROFILE=C:\\ProgramData&quot;</div>
<div class="a m" style="left:1344px;top:277px;line-height:13px;color:#008000;">R9</div>
<div class="a m" style="left:1392px;top:277px;line-height:13px;color:#ff0000;"><i>0</i><i>0</i><i>0</i><i>0</i><i>0</i><i>0</i>7825AFFB98</div>
<div class="a m" style="left:1344px;top:291px;line-height:13px;color:#000;">R1<i>0</i></div>
<div class="a m" style="left:1392px;top:291px;line-height:13px;color:#ff0000;"><i>0</i><i>0</i><i>0</i><i>0</i><i>0</i><i>0</i><i>0</i><i>0</i><i>0</i><i>0</i><i>0</i><i>0</i><i>0</i><i>0</i>12</div>
<div class="a m" style="left:1344px;top:305px;line-height:13px;color:#000;">R11</div>
<div class="a m" style="left:1392px;top:305px;line-height:13px;color:#ff0000;"><i>0</i><i>0</i><i>0</i><i>0</i><i>0</i><i>0</i>7825AFFBB<i>0</i></div>
<div class="a m" style="left:1344px;top:319px;line-height:13px;color:#000;">R12</div>
<div class="a m" style="left:1392px;top:319px;line-height:13px;color:#000;"><i>0</i><i>0</i><i>0</i><i>0</i><i>0</i><i>0</i><i>0</i><i>0</i><i>0</i><i>0</i><i>0</i><i>0</i><i>0</i><i>0</i><i>0</i><i>0</i></div>
<div class="a m" style="left:1344px;top:333px;line-height:13px;color:#000;">R13</div>
<div class="a m" style="left:1392px;top:333px;line-height:13px;color:#000;"><i>0</i><i>0</i><i>0</i><i>0</i><i>0</i><i>0</i><i>0</i><i>0</i><i>0</i><i>0</i><i>0</i><i>0</i><i>0</i><i>0</i><i>0</i><i>0</i></div>
<div class="a m" style="left:1344px;top:347px;line-height:13px;color:#000;">R14</div>
<div class="a m" style="left:1392px;top:347px;line-height:13px;color:#000;"><i>0</i><i>0</i><i>0</i><i>0</i><i>0</i><i>0</i><i>0</i><i>0</i><i>0</i><i>0</i><i>0</i><i>0</i><i>0</i><i>0</i><i>0</i><i>0</i></div>
<div class="a m" style="left:1344px;top:361px;line-height:13px;color:#000;">R15</div>
<div class="a m" style="left:1392px;top:361px;line-height:13px;color:#000;"><i>0</i><i>0</i><i>0</i><i>0</i><i>0</i><i>0</i><i>0</i><i>0</i><i>0</i><i>0</i><i>0</i><i>0</i><i>0</i><i>0</i><i>0</i><i>0</i></div>
<div class="a m" style="left:1344px;top:389px;line-height:13px;color:#000;">RIP</div>
<div class="a m" style="left:1392px;top:389px;line-height:13px;color:#ff0000;"><i>0</i><i>0</i><i>0</i><i>0</i>7FF794A526FA</div>
<div class="a m" style="left:1560px;top:389px;line-height:13px;color:#000;">output.<i>0</i><i>0</i><i>0</i><i>0</i>7FF794A526FA</div>
<div class="a" style="left:1344px;top:148px;width:24px;height:2px;background:#00a000"></div>
<div class="a m" style="left:1344px;top:417px;line-height:13px;color:#000;">RFLAGS</div>
<div class="a m" style="left:1416px;top:417px;line-height:13px;color:#ff0000;"><i>0</i><i>0</i><i>0</i><i>0</i><i>0</i><i>0</i><i>0</i><i>0</i><i>0</i><i>0</i><i>0</i><i>0</i><i>0</i>344</div>
<div class="a m" style="left:1344px;top:431px;line-height:13px;color:#000;">ZF</div>
<div class="a m" style="left:1368px;top:431px;line-height:13px;color:#000;">1</div>
<div class="a" style="left:1344px;top:442px;width:16px;height:2px;background:#aa0000"></div>
<div class="a m" style="left:1392px;top:431px;line-height:13px;color:#000;">PF</div>
<div class="a m" style="left:1416px;top:431px;line-height:13px;color:#000;">1</div>
<div class="a" style="left:1392px;top:442px;width:16px;height:2px;background:#aa0000"></div>
<div class="a m" style="left:1440px;top:431px;line-height:13px;color:#000;">AF</div>
<div class="a m" style="left:1464px;top:431px;line-height:13px;color:#000;"><i>0</i></div>
<div class="a" style="left:1440px;top:442px;width:16px;height:2px;background:#aa0000"></div>
<div class="a m" style="left:1344px;top:445px;line-height:13px;color:#000;">OF</div>
<div class="a m" style="left:1368px;top:445px;line-height:13px;color:#000;"><i>0</i></div>
<div class="a" style="left:1344px;top:456px;width:16px;height:2px;background:#aa0000"></div>
<div class="a m" style="left:1392px;top:445px;line-height:13px;color:#000;">SF</div>
<div class="a m" style="left:1416px;top:445px;line-height:13px;color:#000;"><i>0</i></div>
<div class="a" style="left:1392px;top:456px;width:16px;height:2px;background:#aa0000"></div>
<div class="a m" style="left:1440px;top:445px;line-height:13px;color:#000;">DF</div>
<div class="a m" style="left:1464px;top:445px;line-height:13px;color:#000;"><i>0</i></div>
<div class="a m" style="left:1344px;top:459px;line-height:13px;color:#000;">CF</div>
<div class="a m" style="left:1368px;top:459px;line-height:13px;color:#000;"><i>0</i></div>
<div class="a" style="left:1344px;top:470px;width:16px;height:2px;background:#aa0000"></div>
<div class="a m" style="left:1392px;top:459px;line-height:13px;color:#000;">TF</div>
<div class="a m" style="left:1416px;top:459px;line-height:13px;color:#ff0000;">1</div>
<div class="a m" style="left:1440px;top:459px;line-height:13px;color:#000;">IF</div>
<div class="a m" style="left:1464px;top:459px;line-height:13px;color:#000;">1</div>
<div class="a" style="left:1335px;top:487px;width:286px;height:21px;background:#f0f0f0"></div>
<div class="a" style="left:1356px;top:488px;width:265px;height:19px;background:#cdcdcd"></div>
<svg style="left:1341px;top:493px" width="8" height="10" viewBox="0 0 8 10"><path d="M6 1.2 L2.2 5 L6 8.8" fill="none" stroke="#505050" stroke-width="2"/></svg>
<div class="a" style="left:1335px;top:508px;width:286px;height:1px;background:#f0f0f0"></div>
<div class="a" style="left:1335px;top:509px;width:290px;height:22px;background:#e1e1e1;border:1px solid #a3a3a3"></div>
<div class="ui" style="left:1339.3px;top:513px;transform:scaleX(1.03)">Default (x64 fastcall)</div>
<div class="a" style="left:1335px;top:531px;width:286px;height:87px;background:#fff8f0;border-left:1px solid #7f858a;border-top:1px solid #7f858a;border-bottom:1px solid #80868a"></div>
<div class="a" style="left:1336px;top:532px;width:285px;height:12px;background:#c0c0c0"></div>
<div class="a m" style="left:1340px;top:532px;line-height:13px;color:#000;">1: rcx <i>0</i><i>0</i><i>0</i><i>0</i><i>0</i><i>0</i><i>0</i><i>0</i><i>0</i><i>0</i><i>0</i><i>0</i><i>0</i><i>0</i><i>0</i>1 <i>0</i><i>0</i><i>0</i><i>0</i><i>0</i><i>0</i><i>0</i><i>0</i><i>0</i><i>0</i><i>0</i><i>0</i><i>0</i><i>0</i><i>0</i>1</div>
<div class="a m" style="left:1340px;top:545px;line-height:13px;color:#000;">2: rdx <i>0</i><i>0</i><i>0</i><i>0</i><i>0</i>199AF749<i>0</i>C<i>0</i> <i>0</i><i>0</i><i>0</i><i>0</i><i>0</i>199AF749<i>0</i>C<i>0</i></div>
<div class="a m" style="left:1340px;top:558px;line-height:13px;color:#000;">3: r8 <i>0</i><i>0</i><i>0</i><i>0</i><i>0</i>199AF745E8<i>0</i> <i>0</i><i>0</i><i>0</i><i>0</i><i>0</i>199AF745E8<i>0</i></div>
<div class="a m" style="left:1340px;top:571px;line-height:13px;color:#000;">4: r9 <i>0</i><i>0</i><i>0</i><i>0</i><i>0</i><i>0</i>7825AFFB98 <i>0</i><i>0</i><i>0</i><i>0</i><i>0</i><i>0</i>7825AFFB98</div>
<div class="a m" style="left:1340px;top:584px;line-height:13px;color:#000;">5: [rsp+28] <i>0</i><i>0</i><i>0</i><i>0</i><i>0</i><i>0</i><i>0</i><i>0</i><i>0</i><i>0</i><i>0</i><i>0</i><i>0</i><i>0</i><i>0</i><i>0</i> <i>0</i><i>0</i><i>0</i><i>0</i><i>0</i><i>0</i><i>0</i><i>0</i><i>0</i><i>0</i><i>0</i><i>0</i><i>0</i><i>0</i><i>0</i><i>0</i></div>
<div class="a" style="left:0;top:558px;width:1334px;height:1px;background:#a0a4a8"></div>
<div class="a" style="left:0;top:559px;width:1334px;height:1px;background:#f0f0f0"></div>
<div class="a" style="left:0;top:560px;width:1334px;height:58px;background:#fff8f0;border-top:1px solid #7f858a;border-right:1px solid #7f858a;border-bottom:1px solid #80868a"></div>
<div class="a m" style="left:3px;top:561px;line-height:13px;color:#000;">eax=<i>0</i></div>
<div class="a m" style="left:3px;top:600px;line-height:13px;color:#000;">.text:<i>0</i><i>0</i><i>0</i><i>0</i>7FF794A526FA output.exe:$26FA #1AFA</div>
<div class="a" style="left:1334px;top:531px;width:1px;height:88px;background:#f0f0f0"></div>
<div class="a" style="left:0;top:618px;width:1621px;height:6px;background:#f0f0f0"></div>
<div class="a" style="left:0;top:619px;width:1160px;height:1px;background:#d9d9d9"></div>
<div class="a" style="left:0;top:620px;width:97px;height:4px;background:#fff"></div>
<div class="a" style="left:98px;top:621px;width:666px;height:1px;background:#d9d9d9"></div>
<div class="a" style="left:97px;top:621px;width:1px;height:3px;background:#d9d9d9"></div>
<div class="a" style="left:193px;top:621px;width:1px;height:3px;background:#d9d9d9"></div>
<div class="a" style="left:291px;top:621px;width:1px;height:3px;background:#d9d9d9"></div>
<div class="a" style="left:390px;top:621px;width:1px;height:3px;background:#d9d9d9"></div>
<div class="a" style="left:488px;top:621px;width:1px;height:3px;background:#d9d9d9"></div>
<div class="a" style="left:589px;top:621px;width:1px;height:3px;background:#d9d9d9"></div>
<div class="a" style="left:678px;top:621px;width:1px;height:3px;background:#d9d9d9"></div>
<div class="a" style="left:764px;top:621px;width:1px;height:3px;background:#d9d9d9"></div>
<svg style="left:698px;top:621px" width="8" height="8" viewBox="0 0 8 8"><circle cx="4" cy="4" r="3.5" fill="#e02020"/></svg>
<div class="a" style="left:1161px;top:619px;width:136px;height:5px;background:#000"></div>
<div class="a m" style="left:1166px;top:619px;line-height:13px;color:#fff;width:130px;overflow:hidden;height:5px"><i>0</i><i>0</i><i>0</i><i>0</i><i>0</i><i>0</i>7825AFFA3<i>0</i></div>
<div class="a" style="left:1297px;top:619px;width:138px;height:5px;background:#c0c0c0"></div>
<div class="a m" style="left:1302px;top:619px;line-height:13px;color:#000;height:5px;overflow:hidden"><i>0</i><i>0</i><i>0</i><i>0</i><i>0</i><i>0</i><i>0</i>2<i>0</i><i>0</i><i>0</i><i>0</i><i>0</i><i>0</i><i>0</i><i>0</i></div>
</body></html>
